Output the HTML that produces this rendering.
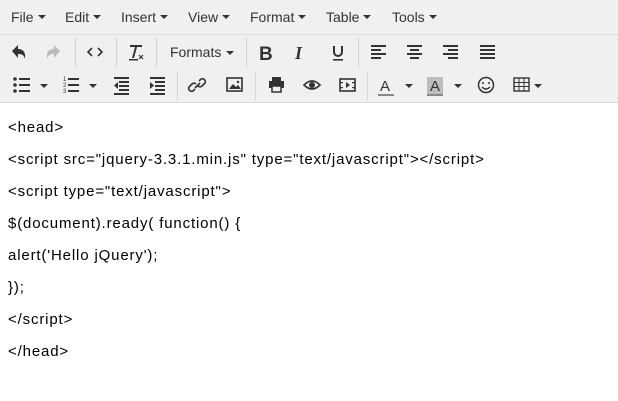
<!DOCTYPE html>
<html><head><meta charset="utf-8"><style>
*{margin:0;padding:0;box-sizing:border-box}
body{width:618px;height:401px;background:#fff;font-family:"Liberation Sans",Arial,sans-serif;color:#333;position:relative;overflow:hidden}
#bar{position:absolute;left:0;top:0;width:618px;height:103px;background:#f0f0f0;border-bottom:1px solid #d9d9d9}
#mline{position:absolute;left:0;top:34px;width:618px;height:1px;background:#dcdcdc}
.m{position:absolute;top:9px;font-size:14px;color:#333}
.c{display:inline-block;width:0;height:0;border-left:4px solid transparent;border-right:4px solid transparent;border-top:4px solid #333;vertical-align:middle;margin-left:4px;margin-top:-2px}
.sep{position:absolute;width:1px;height:30px;background:#d6d6d6}
.i{position:absolute}
.t{position:absolute;left:8px;font-size:15px;letter-spacing:0.85px;color:#000}
</style></head><body>
<div id="bar"></div><div id="mline"></div>
<div class="m" style="left:11px">File<span class="c"></span></div>
<div class="m" style="left:65px">Edit<span class="c"></span></div>
<div class="m" style="left:121px">Insert<span class="c"></span></div>
<div class="m" style="left:188px">View<span class="c"></span></div>
<div class="m" style="left:250px">Format<span class="c"></span></div>
<div class="m" style="left:326px">Table<span class="c"></span></div>
<div class="m" style="left:392px">Tools<span class="c"></span></div>

<div class="sep" style="left:75px;top:38px"></div>
<div class="sep" style="left:116px;top:38px"></div>
<div class="sep" style="left:156px;top:38px"></div>
<div class="sep" style="left:246px;top:38px"></div>
<div class="sep" style="left:358px;top:38px"></div>
<div class="sep" style="left:177px;top:71px"></div>
<div class="sep" style="left:255px;top:71px"></div>
<div class="sep" style="left:367px;top:71px"></div>

<svg class="i" style="left:0;top:35px" width="618" height="68">
<g fill="#333">
<path d="M12 16 l6-6 v4 c5 0 8 3 7 10 c-1-4-3-5-7-5 v4z"/>
<path d="M60 16 l-6-6 v4 c-5 0-8 3-7 10 c1-4 3-5 7-5 v4z" fill="#bbb"/>
<path d="M92 13 l-4 4 4 4 M98 13 l4 4 -4 4" stroke="#333" stroke-width="1.6" fill="none"/>
<path d="M130 10 h12 v2 h-5 l-3 11 h-2 l3-11 h-5z"/><rect x="129" y="24" width="9" height="1.5"/>
<path d="M139 20 l4 4 M143 20 l-4 4" stroke="#333" stroke-width="1.2"/>
<text x="170" y="22" font-size="14" font-family="Liberation Sans" fill="#333">Formats</text>
<path d="M226 16 h8 l-4 4z"/>
<text x="259" y="25" font-size="19" font-weight="bold" font-family="Liberation Sans">B</text>
<text x="295" y="24" font-size="18" font-style="italic" font-weight="bold" font-family="Liberation Serif">I</text>
<path d="M334 11 v6 a4 4 0 0 0 8 0 v-6" stroke="#333" stroke-width="2" fill="none"/><rect x="333" y="24" width="10" height="1.6"/>
<rect x="371" y="10" width="15" height="2"/><rect x="371" y="14" width="10" height="2"/><rect x="371" y="18" width="15" height="2"/><rect x="371" y="22" width="10" height="2"/>
<rect x="407" y="10" width="15" height="2"/><rect x="410" y="14" width="9" height="2"/><rect x="407" y="18" width="15" height="2"/><rect x="410" y="22" width="9" height="2"/>
<rect x="443" y="10" width="15" height="2"/><rect x="448" y="14" width="10" height="2"/><rect x="443" y="18" width="15" height="2"/><rect x="448" y="22" width="10" height="2"/>
<rect x="480" y="10" width="15" height="2"/><rect x="480" y="14" width="15" height="2"/><rect x="480" y="18" width="15" height="2"/><rect x="480" y="22" width="15" height="2"/>
</g>
<g fill="#333" transform="translate(0,34)">
<circle cx="15" cy="10" r="1.8"/><circle cx="15" cy="16" r="1.8"/><circle cx="15" cy="22" r="1.8"/>
<rect x="19" y="9" width="11" height="2"/><rect x="19" y="15" width="11" height="2"/><rect x="19" y="21" width="11" height="2"/>
<path d="M40 15 h8 l-4 4z"/>
<text x="63" y="12" font-size="6">1</text><text x="63" y="18" font-size="6">2</text><text x="63" y="24" font-size="6">3</text>
<rect x="68" y="9" width="11" height="2"/><rect x="68" y="15" width="11" height="2"/><rect x="68" y="21" width="11" height="2"/>
<path d="M89 15 h8 l-4 4z"/>
<rect x="114" y="8" width="15" height="2"/><rect x="119" y="12" width="10" height="2"/><rect x="119" y="16" width="10" height="2"/><rect x="119" y="20" width="10" height="2"/><rect x="114" y="24" width="15" height="2"/><path d="M118 13 v7 l-4-3.5z"/>
<rect x="150" y="8" width="15" height="2"/><rect x="155" y="12" width="10" height="2"/><rect x="155" y="16" width="10" height="2"/><rect x="155" y="20" width="10" height="2"/><rect x="150" y="24" width="15" height="2"/><path d="M150 13 v7 l4-3.5z"/>
<path d="M195 20 l-2 2 a3 3 0 0 1-4-4 l3-3 a3 3 0 0 1 4 0 M199 12 l2-2 a3 3 0 0 1 4 4 l-3 3 a3 3 0 0 1-4 0 M195 19 l5-5" stroke="#333" stroke-width="1.6" fill="none"/>
<rect x="227" y="9" width="15" height="13" stroke="#333" stroke-width="1.6" fill="none"/><path d="M229 20 l4-5 3 3 2-2 3 4z"/><circle cx="238" cy="13" r="1.2"/>
<rect x="272" y="8" width="9" height="4"/><rect x="269" y="12" width="15" height="7"/><rect x="272" y="17" width="9" height="6" fill="#f0f0f0" stroke="#333" stroke-width="1.5"/>
<path d="M304 16 q8-8 16 0 q-8 8-16 0z" stroke="#333" stroke-width="1.6" fill="none"/><circle cx="312" cy="16" r="3"/>
<rect x="340" y="10" width="15" height="12" stroke="#333" stroke-width="1.6" fill="none"/><path d="M346 13 v6 l4-3z"/><rect x="340" y="13" width="3" height="1.2"/><rect x="340" y="18" width="3" height="1.2"/><rect x="352" y="13" width="3" height="1.2"/><rect x="352" y="18" width="3" height="1.2"/>
<text x="380" y="22" font-size="15" font-family="Liberation Sans">A</text><rect x="378" y="25" width="16" height="2" fill="#888"/>
<path d="M405 15 h8 l-4 4z"/>
<rect x="427" y="8" width="16" height="17" fill="#bdbdbd"/>
<text x="430" y="22" font-size="15" font-family="Liberation Sans">A</text><rect x="427" y="25" width="16" height="2" fill="#888"/>
<path d="M454 15 h8 l-4 4z"/>
<circle cx="486" cy="16" r="7.5" stroke="#333" stroke-width="1.5" fill="none"/><circle cx="483" cy="14" r="1"/><circle cx="489" cy="14" r="1"/><path d="M482 18 q4 4 8 0" stroke="#333" stroke-width="1.3" fill="none"/>
<rect x="514" y="9" width="15" height="13" stroke="#333" stroke-width="1.4" fill="none"/><path d="M514 13.5h15M514 17.5h15M519 9v13M524 9v13" stroke="#333" stroke-width="1"/>
<path d="M534 15 h8 l-4 4z"/>
</g>
</svg>

<div class="t" style="top:119px">&lt;head&gt;</div>
<div class="t" style="top:151px">&lt;script src="jquery-3.3.1.min.js" type="text/javascript"&gt;&lt;/script&gt;</div>
<div class="t" style="top:183px">&lt;script type="text/javascript"&gt;</div>
<div class="t" style="top:215px">$(document).ready( function() {</div>
<div class="t" style="top:247px">alert('Hello jQuery');</div>
<div class="t" style="top:279px">});</div>
<div class="t" style="top:311px">&lt;/script&gt;</div>
<div class="t" style="top:343px">&lt;/head&gt;</div>
</body></html>
